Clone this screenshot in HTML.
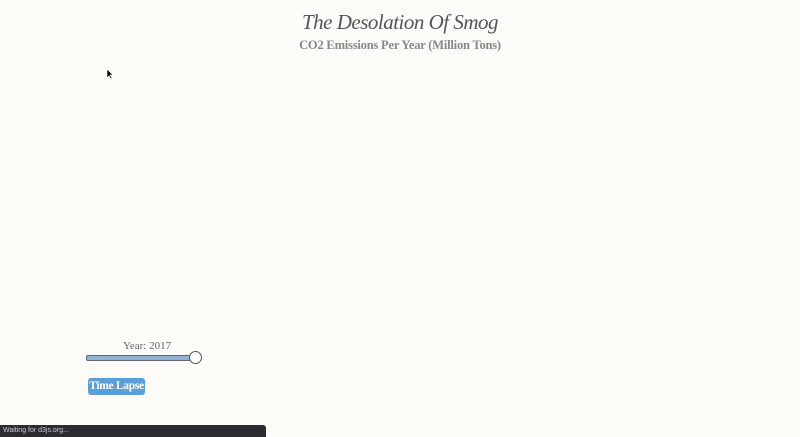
<!DOCTYPE html>
<html><head><style>
body{margin:0;width:800px;height:437px;background:#fcfbf8;position:relative;overflow:hidden;font-family:"Liberation Serif",serif}
.t{position:absolute;top:10px;left:0;width:800px;text-align:center;font-style:italic;font-size:21px;color:#555;letter-spacing:-0.5px}
.s{position:absolute;top:38px;left:0;width:800px;text-align:center;font-weight:bold;font-size:12.5px;color:#888;letter-spacing:-0.2px}
.y{position:absolute;top:340px;left:123px;font-size:11px;color:#666}
.track{position:absolute;left:86px;top:355px;width:110px;height:4px;background:#8db4d6;border:1px solid #667;border-radius:2px}
.knob{position:absolute;left:189px;top:351px;width:11px;height:11px;border:1px solid #555;border-radius:50%;background:#fff}
.btn{position:absolute;left:88px;top:378px;width:57px;height:17px;background:#5b9fd6;border-radius:3px;color:#fff;font-weight:bold;font-size:11.5px;text-align:center;line-height:17px;white-space:nowrap;letter-spacing:-0.3px}
.st{position:absolute;left:0;top:425px;width:266px;height:12px;background:#2a2c30;border-radius:0 3px 0 0;color:#ccc;font-family:"Liberation Sans",sans-serif;font-size:7px;line-height:12px;padding-left:3px;box-sizing:border-box}
</style></head><body>
<div class="t">The Desolation Of Smog</div>
<div class="s">CO2 Emissions Per Year (Million Tons)</div>
<svg style="position:absolute;left:106px;top:68px" width="8" height="12"><path d="M1 1 L1 10 L3 8 L5 11 L6 10 L4 7 L7 7 Z" fill="#000" stroke="#fff" stroke-width="0.6"/></svg>
<div class="y">Year: 2017</div>
<div class="track"></div><div class="knob"></div>
<div class="btn">Time Lapse</div>
<div class="st">Waiting for d3js.org...</div>
</body></html>
